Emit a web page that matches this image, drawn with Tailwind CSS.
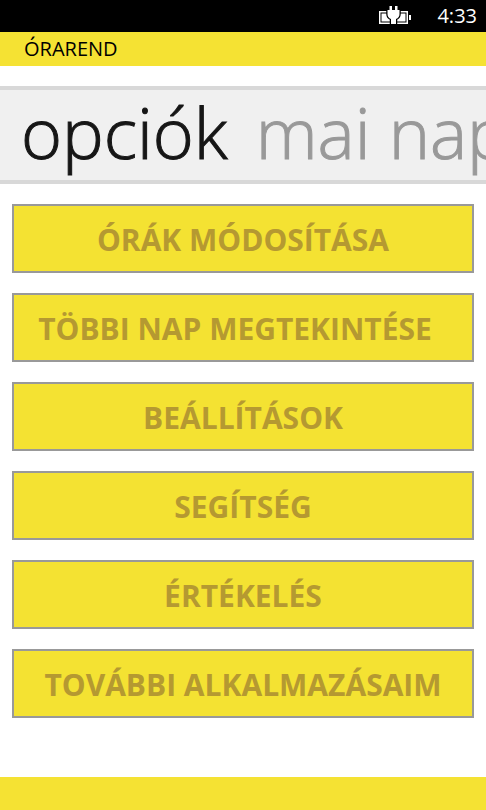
<!DOCTYPE html>
<html lang="hu">
<head>
<meta charset="utf-8">
<meta name="viewport" content="width=device-width, initial-scale=1">
<title>Órarend</title>
<script src="https://cdn.jsdelivr.net/npm/@tailwindcss/browser@4"></script>
</head>
<body class="flex min-h-screen flex-col overflow-x-hidden bg-white font-['Open_Sans','Noto_Sans',sans-serif]">
<div class="flex h-8 items-center justify-end gap-6 bg-black pr-[9px] text-white">
  <svg class="h-5 w-[34px]" viewBox="0 0 34 20" fill="none" role="img" aria-label="Töltés">
    <path d="M.75 5.750H28.250V17.250H.75Z" stroke="#fff" stroke-width="1.500"/>
    <path d="M2.500 7.500H26.500V15.500H2.500Z" fill="#fff"/>
    <path d="M30 9h2v5h-2z" fill="#fff"/>
    <path d="M10.500 0h2.500v4h3V0h2.500v4h2v4q0 3.500-3.500 5v5h-5v-5q-3.500-1.500-3.500-5V4h2z" fill="#fff" stroke="#000" stroke-width="2.500" paint-order="stroke"/>
  </svg>
  <time class="text-xl leading-8">4:33</time>
</div>
<header class="flex h-[34px] items-center bg-[#f5e233] px-6">
  <h1 class="text-xl text-black">ÓRAREND</h1>
</header>
<nav class="mt-5 flex h-[98px] items-start gap-7 overflow-hidden border-y-4 border-[#d8d8d8] bg-[#f0f0f0] pl-[21px] text-[70px] leading-[84px] font-light whitespace-nowrap [-webkit-text-stroke:1px]">
  <a href="#opciok" aria-current="page" class="text-[#161616]">opciók</a>
  <a href="#mai-nap" class="text-[#999999]">mai nap</a>
</nav>
<main id="opciok" class="flex grow flex-col gap-5 px-3 pt-5 pb-14 text-[30px] leading-10 font-bold text-[#b59931]">
  <button type="button" class="h-[69px] border-2 border-[#999999] bg-[#f4e232] pt-0.5 whitespace-nowrap">ÓRÁK MÓDOSÍTÁSA</button>
  <button type="button" class="h-[69px] border-2 border-[#999999] bg-[#f4e232] pt-0.5 pr-4 whitespace-nowrap">TÖBBI NAP MEGTEKINTÉSE</button>
  <button type="button" class="h-[69px] border-2 border-[#999999] bg-[#f4e232] pt-0.5 whitespace-nowrap">BEÁLLÍTÁSOK</button>
  <button type="button" class="h-[69px] border-2 border-[#999999] bg-[#f4e232] pt-0.5 whitespace-nowrap">SEGÍTSÉG</button>
  <button type="button" class="h-[69px] border-2 border-[#999999] bg-[#f4e232] pt-0.5 whitespace-nowrap">ÉRTÉKELÉS</button>
  <button type="button" class="h-[69px] border-2 border-[#999999] bg-[#f4e232] pt-0.5 whitespace-nowrap">TOVÁBBI ALKALMAZÁSAIM</button>
</main>
<footer class="h-[33px] bg-[#f5e233]"></footer>
</body>
</html>
